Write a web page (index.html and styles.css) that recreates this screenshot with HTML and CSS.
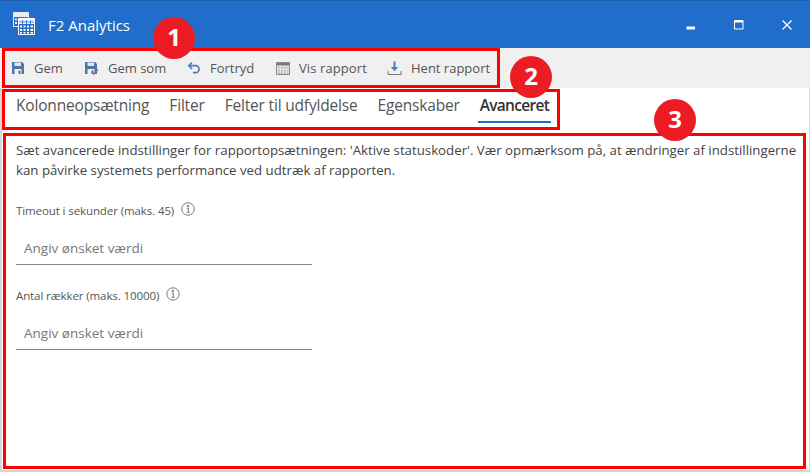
FILE: index.html
```html
<!DOCTYPE html>
<html lang="da">
<head>
<meta charset="utf-8">
<title>F2 Analytics</title>
<link rel="stylesheet" href="styles.css">
</head>
<body>
<div class="window">
  <header class="titlebar">
    <svg class="logo" width="22" height="23" viewBox="0 0 22 23" fill="none">
      <path d="M0.500 0.500h15v14h-15z" fill="#216dcb" stroke="#e4edf8"/>
      <path d="M1 1h14v4H1z" fill="#e4edf8"/>
      <path d="M2 6.500h2v2H2zM5.500 6.500h2v2h-2zM2 10h2v2H2zM0 14h4v1H0z" fill="#e4edf8"/>
      <path d="M5 7h16.500v15.500H5z" fill="#216dcb"/>
      <path d="M5.500 6.500h16v16h-16z" stroke="#fff"/>
      <path d="M6 7h15v5H6z" fill="#f4f8fc"/>
      <path d="M9.500 8v4M13.500 8v4M17.500 8v4M6 10h15" stroke="#216dcb" stroke-width="0.800"/>
      <path d="M7 13.500h2v2H7zM10.500 13.500h2v2h-2zM14 13.500h2v2h-2zM17.500 13.500h2.500v2h-2.500zM7 17h2v2H7zM10.500 17h2v2h-2zM14 17h2v2h-2zM17.500 17h2.500v2h-2.500zM7 20h2v1.500H7zM10.500 20h2v1.500h-2zM14 20h2v1.500h-2zM17.500 20h2.500v1.500h-2.500z" fill="#fff"/>
    </svg>
    <span class="app-name">F2 Analytics</span>
    <div class="window-controls">
      <svg class="ctl" width="10" height="10" viewBox="0 0 10 10"><path d="M0.500 6.500h8.500v3H0.500z" fill="#fff"/></svg>
      <svg class="ctl" width="10" height="10" viewBox="0 0 10 10"><path d="M0.500 0.500h8.500v8.500H0.500z" fill="none" stroke="#fff"/><path d="M0.500 0.500h8.500v2H0.500z" fill="#fff"/></svg>
      <svg class="ctl" width="10" height="10" viewBox="0 0 10 10"><path d="M0.500 0.500l9 9M9.500 0.500l-9 9" stroke="#fff" stroke-width="1.300"/></svg>
    </div>
  </header>

  <div class="toolbar">
    <nav class="toolbar-group">
      <button class="tool tool-gem">
        <svg width="14" height="14" viewBox="0 0 14 14"><path d="M1 1h10l2 2v10H1z" fill="#4a77a8"/><path d="M3.500 1.500h6.500v3.500H3.500z" fill="#dfe7f0"/><path d="M3.500 8h7v5h-7z" fill="#f0f0f0"/><path d="M7.500 9.500h2v3.500h-2z" fill="#4a77a8"/></svg>
        <span>Gem</span>
      </button>
      <button class="tool tool-gemsom">
        <svg width="15" height="14" viewBox="0 0 15 14"><path d="M1 1h10l2 2v10H1z" fill="#4a77a8"/><path d="M3.500 1.500h6.500v3.500H3.500z" fill="#dfe7f0"/><path d="M3.500 8h7v5h-7z" fill="#f0f0f0"/><path d="M7.500 9.500h2v3.500h-2z" fill="#4a77a8"/><path d="M9 13.500l5-5" stroke="#a05a8c" stroke-width="1.500"/></svg>
        <span>Gem som</span>
      </button>
      <button class="tool tool-fortryd">
        <svg width="14" height="14" viewBox="0 0 14 14" fill="none"><path d="M5 1.500L1.800 4.700 5 7.900" stroke="#4f7fb0" stroke-width="1.700"/><path d="M2 4.700h6.500a3.500 3.500 0 0 1 0 7H6" stroke="#4f7fb0" stroke-width="1.700"/></svg>
        <span>Fortryd</span>
      </button>
      <button class="tool tool-vis">
        <svg width="14" height="13" viewBox="0 0 14 13"><path d="M0.500 0.500h13v12h-13z" fill="#e8e8e8" stroke="#8a8a8a"/><path d="M1 1h12v2.500H1z" fill="#7a7a7a"/><path d="M2 5h2v1.500H2zM5 5h2v1.500H5zM8 5h2v1.500H8zM11 5h1.500v1.500H11z" fill="#e9a66a"/><path d="M2 8h2v1.500H2zM5 8h2v1.500H5zM8 8h2v1.500H8zM11 8h1.500v1.500H11zM2 10.500h2V12H2zM5 10.500h2V12H5zM8 10.500h2V12H8zM11 10.500h1.500V12H11z" fill="#b3b3b3"/></svg>
        <span>Vis rapport</span>
      </button>
      <button class="tool tool-hent">
        <svg width="15" height="15" viewBox="0 0 15 15" fill="none"><path d="M7.500 0.500v7" stroke="#3f7fc0" stroke-width="2"/><path d="M3.800 6h7.400L7.500 10.200z" fill="#3f7fc0"/><path d="M1 10v3.500h13V10" stroke="#777"/></svg>
        <span>Hent rapport</span>
      </button>
    </nav>
  </div>

  <nav class="tabs">
    <a class="tab">Kolonneopsætning</a>
    <a class="tab">Filter</a>
    <a class="tab">Felter til udfyldelse</a>
    <a class="tab">Egenskaber</a>
    <a class="tab active">Avanceret</a>
  </nav>

  <main class="content">
    <p class="intro">Sæt avancerede indstillinger for rapportopsætningen: 'Aktive statuskoder'. Vær opmærksom på, at ændringer af indstillingerne kan påvirke systemets performance ved udtræk af rapporten.</p>
    <div class="field field-first">
      <label class="field-label">Timeout i sekunder (maks. 45)
        <svg class="info" width="14" height="14" viewBox="0 0 14 14" fill="none"><circle cx="7" cy="7" r="6.200" stroke="#777"/><path d="M5.700 6.200h1.600v3.800M5.500 10.300h3.200M6.300 3.300h1.300v1.300H6.300z" stroke="#777"/></svg>
      </label>
      <div class="input">Angiv ønsket værdi</div>
    </div>
    <div class="field field-second">
      <label class="field-label">Antal rækker (maks. 10000)
        <svg class="info" width="14" height="14" viewBox="0 0 14 14" fill="none"><circle cx="7" cy="7" r="6.200" stroke="#777"/><path d="M5.700 6.200h1.600v3.800M5.500 10.300h3.200M6.300 3.300h1.300v1.300H6.300z" stroke="#777"/></svg>
      </label>
      <div class="input">Angiv ønsket værdi</div>
    </div>
  </main>

  <span class="badge badge-1">1</span>
  <span class="badge badge-2">2</span>
  <span class="badge badge-3">3</span>
</div>
</body>
</html>
```

FILE: styles.css
```css
* { box-sizing: border-box; }
html, body { margin: 0; height: 100%; }
body { background: #fff; font-family: "Open Sans", "Noto Sans", sans-serif; color: #444; overflow: hidden; }
.window { position: relative; width: 810px; height: 472px; display: flex; flex-direction: column; background: #fff; border-left: 2px solid #d6d6d6; border-right: 1px solid #d6d6d6; border-bottom: 2px solid #d6d6d6; }
.titlebar { flex: none; height: 48px; margin: 0 -1px 0 -2px; background: #216dcb; border-top: 1px solid #1c5ead; display: flex; align-items: center; padding-left: 13px; color: #fff; }
.logo { flex: none; margin-top: -3px; }
.app-name { margin-left: 13px; font-size: 15px; margin-top: 0; }
.window-controls { margin-left: auto; display: flex; gap: 38px; padding-right: 18px; margin-top: 1px; }
.ctl { display: block; }
.toolbar { flex: none; height: 40px; background: #f0f0f0; margin-left: -2px; margin-right: -1px; }
.toolbar-group { margin-left: 2px; width: 498px; height: 40px; border: 3px solid #f00; display: flex; align-items: center; padding-left: 6px; }
.tool { border: 0; background: none; padding: 0; display: flex; align-items: center; font: inherit; font-size: 13px; color: #555; gap: 9px; white-space: nowrap; }
.tool-gem { width: 73px; }
.tool-gemsom { width: 103px; }
.tool-fortryd { width: 89px; }
.tool-vis { width: 111px; }
.tool-vis span { letter-spacing: 0.1px; }
.tab, .tool span { display: block; }
.tabs { flex: none; margin: 1px 0 0 0; width: 558px; height: 41px; border: 3px solid #f00; display: flex; padding-left: 11px; gap: 20px; }
.tab { height: 31px; font-size: 15.500px; letter-spacing: -0.18px; line-height: 27px; color: #555; white-space: nowrap; }
.tab.active { font-weight: 600; color: #333; border-bottom: 2px solid #216dcb; padding: 0 2px; letter-spacing: -0.7px; margin-left: -2px; }
.content { flex: none; margin: 3px 1px 0 1px; width: 803px; height: 336px; border: 3px solid #f00; padding: 0 10px; }
.intro { margin: 0; padding-top: 5px; font-size: 13.250px; line-height: 19.500px; color: #444; width: 785px; }
.field { width: 296px; }
.field-first { margin-top: 21px; }
.field-second { margin-top: 21px; }
.field-label { display: flex; align-items: center; gap: 7px; font-size: 11.500px; height: 18px; color: #555; letter-spacing: -0.1px; }
.info { flex: none; margin-top: -3px; }
.input { margin-top: 14px; height: 32px; padding-left: 8px; border-bottom: 1px solid #8a8a8a; font-size: 13.500px; line-height: 30px; color: #777; }
.badge { position: absolute; width: 42px; height: 42px; border-radius: 50%; background: #ed1c24; color: #fff; font-weight: 700; font-size: 24px; line-height: 40px; text-align: center; }
.badge-1 { left: 151px; top: 17px; }
.badge-2 { left: 508px; top: 56px; }
.badge-3 { left: 652px; top: 99px; }
```
